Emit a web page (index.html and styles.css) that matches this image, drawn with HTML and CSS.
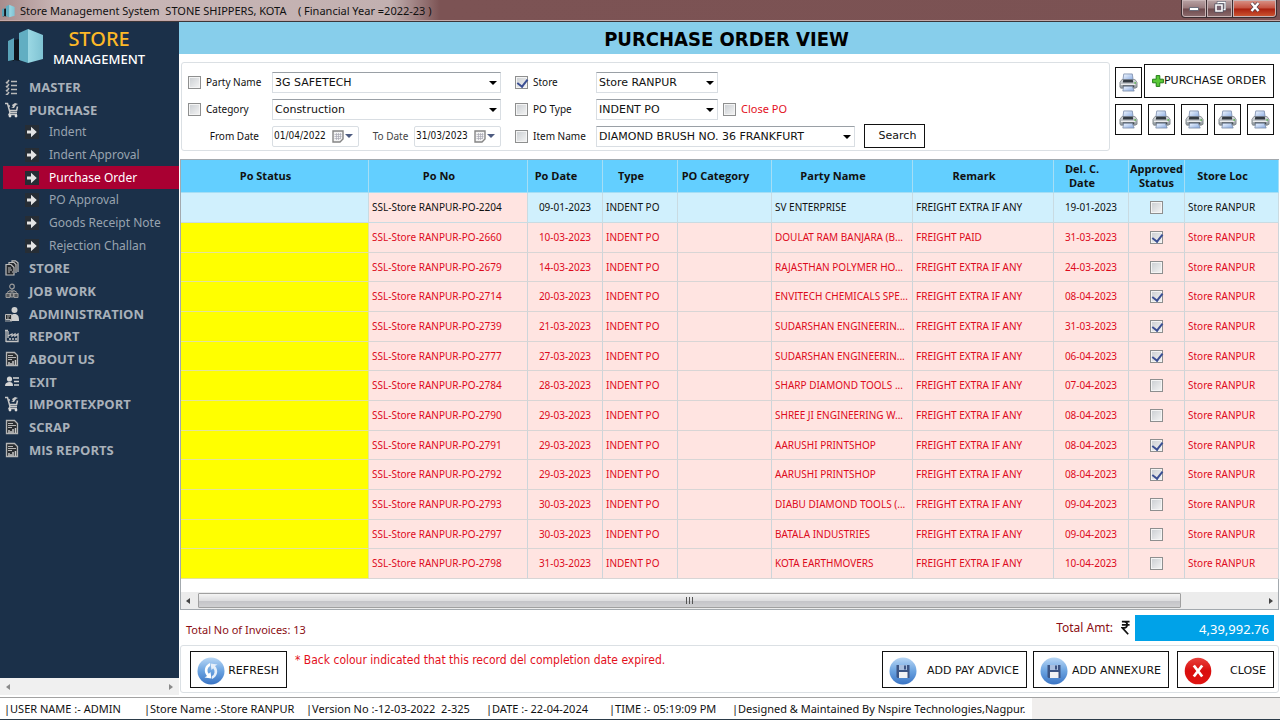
FILE: index.html
```html
<!DOCTYPE html>
<html lang="en">
<head>
<meta charset="utf-8">
<meta name="viewport" content="width=device-width, initial-scale=1">
<title>Store Management System</title>
<link rel="stylesheet" href="styles.css">
</head>
<body>
<svg class="sprite" aria-hidden="true">
  <defs>
    <linearGradient id="gTower" x1="0" x2="1" y1="0" y2="0"><stop offset="0" stop-color="#9bd8e4"/><stop offset="1" stop-color="#7fc3d3"/></linearGradient>
    <linearGradient id="gBlue" x1="0" x2="0" y1="0" y2="1"><stop offset="0" stop-color="#b9d7f5"/><stop offset=".5" stop-color="#6ba3e0"/><stop offset="1" stop-color="#3a74c4"/></linearGradient>
    <linearGradient id="gRed" x1="0" x2="0" y1="0" y2="1"><stop offset="0" stop-color="#e8413c"/><stop offset=".5" stop-color="#d90d0d"/><stop offset="1" stop-color="#e01512"/></linearGradient>
    <linearGradient id="gPaper" x1="0" x2="1" y1="0" y2="1"><stop offset="0" stop-color="#f4f9ff"/><stop offset="1" stop-color="#86a8e0"/></linearGradient>
    <linearGradient id="gBody" x1="0" x2="0" y1="0" y2="1"><stop offset="0" stop-color="#dfe3e6"/><stop offset="1" stop-color="#8d959b"/></linearGradient>
  </defs>
  <symbol id="logo" viewBox="0 0 36 36">
    <path d="M0 32l6-3v4z" fill="#0b0d12"/>
    <path d="M0 13l6-3v22l-6 1z" fill="#5aa3b8"/>
    <path d="M6 12l6-1v22l-6-1z" fill="#0e141c"/>
    <path d="M11 5L20 1v34l-9-3z" fill="#62aec2"/>
    <path d="M20 1l15 6v24l-15 4z" fill="url(#gTower)"/>
  </symbol>
  <symbol id="list" viewBox="0 0 14 16"><path d="M1 3l1 1 2-3M1 7l1 1 2-3M1 11l1 1 2-3M1 15l1 1 2-3M6 2.500h6M6 6.500h6M6 10.500h6M6 14.500h6" fill="none" stroke="#b9b9b9" stroke-width="1.500"/></symbol>
  <symbol id="cart" viewBox="0 0 14 16"><path d="M0 1.500h2.500L5 10.500h7M3 4h2M12.500 4.500L11.500 9M4.500 8.500h7.500M5 10.500l-1 2h8" fill="none" stroke="#c9c9c9" stroke-width="1.500"/><path d="M6 6l2-1-1-2 3-2 3 1-2 1-2 3z" fill="#c9c9c9"/><circle cx="5" cy="14" r="1.400" fill="#ddd"/><circle cx="11" cy="14" r="1.400" fill="#ddd"/></symbol>
  <symbol id="docs" viewBox="0 0 14 16"><path d="M1 4.500h5l3 3V15H1zM4 4V2.500h5l2 2V13M7 2V.800h3.500l2.500 2V12" fill="#26292d" stroke="#bdbdbd" stroke-width="1.200"/><path d="M3 8h3M3 10h4M3 12h2M7 12h1" stroke="#bdbdbd"/></symbol>
  <symbol id="worker" viewBox="0 0 14 16"><circle cx="7" cy="3.500" r="2.300" fill="none" stroke="#9a9a9a" stroke-width="1.200"/><path d="M7 6v3M2 9.500l3-2 2 1 2-1 3 2M1 10.500h4v4H1zM9 10.500h4v4H9zM5.500 10h3v4h-3z" fill="#55585c" stroke="#9a9a9a"/></symbol>
  <symbol id="admin" viewBox="0 0 14 16"><circle cx="9.500" cy="4" r="3" fill="#cfcfcf"/><path d="M5 15c0-5 1-7 4.500-7S14 10 14 15z" fill="#cfcfcf"/><path d="M.500 8.500h6v5h-6z" fill="#2b2e31" stroke="#bbb"/><path d="M2 10h3M2 12h2M0 15h7" stroke="#aaa"/></symbol>
  <symbol id="factory" viewBox="0 0 14 16"><path d="M1 14V2M0 2.500h3M1 13.500h12V6l-3 2V6L7 8V6L3 8M3 3v7" fill="none" stroke="#c4c4c4" stroke-width="1.300"/><path d="M4 11h2M7 11h2M10 11h2" stroke="#c4c4c4" stroke-width="1.500"/></symbol>
  <symbol id="report" viewBox="0 0 14 16"><path d="M1.500 1.500h8l3 3v10h-11z" fill="#2a2d31" stroke="#b5b5b5" stroke-width="1.300"/><path d="M3 4.500h5M3 6.500h8M3 8.500h4" stroke="#b5b5b5"/><path d="M4 14v-3M6 14v-2M8 14v-4M10.500 14V9" stroke="#c9c9c9" stroke-width="1.500"/></symbol>
  <symbol id="card" viewBox="0 0 14 16"><circle cx="4.500" cy="5" r="2.600" fill="#d5d5d5"/><path d="M0 12c0-3 2-4 4.500-4S8 9 8 12z" fill="#d5d5d5"/><path d="M8 4h6M9 7.500h5M9 11h5" stroke="#d5d5d5" stroke-width="1.600"/></symbol>
  <symbol id="arrow" viewBox="0 0 14 14"><path d="M0 0h14v14H0z" fill="#262d35"/><path d="M2 5.500h4V1.800L11.800 7 6 12.200V8.500H2z" fill="#e4e4e4"/></symbol>
  <symbol id="printer" viewBox="0 0 20 20"><path d="M5 1h9l1 7H4z" fill="url(#gPaper)" stroke="#7487a8" stroke-width=".8"/><path d="M3 7h14l2 3v5l-2 1H2l-1-1v-5z" fill="url(#gBody)" stroke="#747b80" stroke-width=".8"/><path d="M4.500 7h10l.500 3H4z" fill="#343b42"/><path d="M2 12h15" stroke="#f6f6f6"/><path d="M4 13h12v2H4z" fill="#454b51"/><path d="M5 14h9l2 5H4z" fill="url(#gPaper)" stroke="#7a89a4" stroke-width=".8"/><circle cx="17" cy="10.500" r=".9" fill="#56b34c"/></symbol>
  <symbol id="plus" viewBox="0 0 12 12"><path d="M4.200.600h3.600v3.600h3.600v3.600H7.800v3.600H4.200V7.800H.600V4.200h3.600z" fill="#59c936" stroke="#227d16"/></symbol>
  <symbol id="refresh" viewBox="0 0 28 28"><circle cx="14" cy="14" r="13.500" fill="url(#gBlue)"/><path d="M13 6a8 8 0 0 0-3 13l-2.500 1.500 7 1-1-6.500-1.700 1.800A5 5 0 0 1 13 9z" fill="#fff"/><path d="M15 22a8 8 0 0 0 3-13l2.500-1.500-7-1 1 6.500 1.700-1.800A5 5 0 0 1 15 19z" fill="#e6effa"/></symbol>
  <symbol id="floppy" viewBox="0 0 28 28"><circle cx="14" cy="14" r="13.500" fill="url(#gBlue)"/><path d="M7.500 8h13v13h-12l-1-1z" fill="#3c5584"/><path d="M10 8h8v5h-8z" fill="#a9bfdf"/><path d="M15 8.500h2v4h-2z" fill="#3c5584"/><path d="M10 15h8.500v6H10z" fill="#f2f3f5"/></symbol>
  <symbol id="cross" viewBox="0 0 28 28"><circle cx="14" cy="14" r="13.300" fill="url(#gRed)"/><path d="M9.800 8.500l8.400 11M18.200 8.500l-8.400 11" stroke="#fff" stroke-width="2.800"/></symbol>
  <symbol id="calendar" viewBox="0 0 12 13"><path d="M1 1h10v8l-3 3H1z" fill="#f3f3f3" stroke="#858585" stroke-width="1.400"/><path d="M2.500 4.500h7M2.500 6.500h7M2.500 8.500h6M4.500 3v7M6.500 3v7M8.500 3v6" stroke="#a9a9b5" stroke-width=".7"/></symbol>
  <symbol id="rupee" viewBox="0 0 10 16"><path d="M1 1.500h8.500M1 5h8.500M1 1.500h2.500c4.500 0 4.500 7 0 7H1.500L8 15.500" fill="none" stroke="#111" stroke-width="1.900"/></symbol>
</svg>

<div class="app">
  <header class="titlebar">
    <svg class="app-icon"><use href="#logo"/></svg>
    <span class="caption">Store Management System&nbsp; STONE SHIPPERS, KOTA&nbsp;&nbsp;&nbsp; ( Financial Year =2022-23 )</span>
    <div class="window-buttons">
      <button class="win" aria-label="Minimize"><svg viewBox="0 0 12 12"><path d="M1.500 6.500h9v3h-9z" fill="#fff" stroke="#555b6b" stroke-width=".8"/></svg></button>
      <button class="win" aria-label="Restore"><svg viewBox="0 0 12 12"><path d="M4 1.500h7v7H4z" fill="none" stroke="#4b4e60" stroke-width="2.400"/><path d="M4 1.500h7v7H4z" fill="none" stroke="#fff" stroke-width="1.300"/><path d="M2 4h6v6H2z" fill="#776270" stroke="#4b4e60" stroke-width="3"/><path d="M2 4h6v6H2z" fill="#776270" stroke="#fff" stroke-width="1.600"/></svg></button>
      <button class="win win-close" aria-label="Close window"><svg viewBox="0 0 12 12"><path d="M2.500 2l7 8M9.500 2l-7 8" stroke="#54404a" stroke-width="3.600"/><path d="M2.500 2l7 8M9.500 2l-7 8" stroke="#fff" stroke-width="2.400"/></svg></button>
    </div>
  </header>

  <div class="workspace">
    <aside class="sidebar">
      <div class="brand">
        <svg class="brand-logo"><use href="#logo"/></svg>
        <div class="brand-text"><span class="brand-top">STORE</span><span class="brand-bottom">MANAGEMENT</span></div>
      </div>
      <nav>
        <ul class="menu">
          <li><a href="#"><svg><use href="#list"/></svg>MASTER</a></li>
          <li><a href="#"><svg><use href="#cart"/></svg>PURCHASE</a></li>
          <li class="sub"><a href="#"><svg><use href="#arrow"/></svg>Indent</a></li>
          <li class="sub"><a href="#"><svg><use href="#arrow"/></svg>Indent Approval</a></li>
          <li class="sub active"><a href="#" aria-current="page"><svg><use href="#arrow"/></svg>Purchase Order</a></li>
          <li class="sub"><a href="#"><svg><use href="#arrow"/></svg>PO Approval</a></li>
          <li class="sub"><a href="#"><svg><use href="#arrow"/></svg>Goods Receipt Note</a></li>
          <li class="sub"><a href="#"><svg><use href="#arrow"/></svg>Rejection Challan</a></li>
          <li><a href="#"><svg><use href="#docs"/></svg>STORE</a></li>
          <li><a href="#"><svg><use href="#worker"/></svg>JOB WORK</a></li>
          <li><a href="#"><svg><use href="#admin"/></svg>ADMINISTRATION</a></li>
          <li><a href="#"><svg><use href="#factory"/></svg>REPORT</a></li>
          <li><a href="#"><svg><use href="#report"/></svg>ABOUT US</a></li>
          <li><a href="#"><svg><use href="#card"/></svg>EXIT</a></li>
          <li><a href="#"><svg><use href="#cart"/></svg>IMPORTEXPORT</a></li>
          <li><a href="#"><svg><use href="#report"/></svg>SCRAP</a></li>
          <li><a href="#"><svg><use href="#report"/></svg>MIS REPORTS</a></li>
        </ul>
      </nav>
      <div class="side-scroll"><i class="tri-left"></i><i class="tri-right"></i></div>
    </aside>

    <main class="main">
      <h1 class="page-title">PURCHASE ORDER VIEW</h1>

      <div class="top">
        <form class="filters">
          <div class="group-left">
            <label class="check"><input type="checkbox">Party Name</label>
            <span class="combo"><select aria-label="Party Name"><option>3G SAFETECH</option></select></span>
            <label class="check"><input type="checkbox">Category</label>
            <span class="combo"><select aria-label="Category"><option>Construction</option></select></span>
            <label class="date-label" for="from">From Date</label>
            <div class="dates">
              <span class="date"><input id="from" type="text" value="01/04/2022"><svg><use href="#calendar"/></svg><i></i></span>
              <label class="to-label" for="to">To Date</label>
              <span class="date"><input id="to" type="text" value="31/03/2023"><svg><use href="#calendar"/></svg><i></i></span>
            </div>
          </div>
          <div class="group-right">
            <label class="check"><input type="checkbox" checked>Store</label>
            <div class="cell"><span class="combo short"><select aria-label="Store"><option>Store RANPUR</option></select></span></div>
            <label class="check"><input type="checkbox">PO Type</label>
            <div class="cell"><span class="combo short"><select aria-label="PO Type"><option>INDENT PO</option></select></span><label class="check red"><input type="checkbox">Close PO</label></div>
            <label class="check"><input type="checkbox">Item Name</label>
            <div class="cell"><span class="combo long"><select aria-label="Item Name"><option>DIAMOND BRUSH NO. 36 FRANKFURT</option></select></span><button type="button" class="search">Search</button></div>
          </div>
        </form>
        <div class="tools">
          <div class="tool-row first"><button class="print" aria-label="Print"><svg><use href="#printer"/></svg></button><button class="add-po"><svg><use href="#plus"/></svg>PURCHASE ORDER</button></div>
          <div class="tool-row">
            <button class="print" aria-label="Print 1"><svg><use href="#printer"/></svg></button>
            <button class="print" aria-label="Print 2"><svg><use href="#printer"/></svg></button>
            <button class="print" aria-label="Print 3"><svg><use href="#printer"/></svg></button>
            <button class="print" aria-label="Print 4"><svg><use href="#printer"/></svg></button>
            <button class="print" aria-label="Print 5"><svg><use href="#printer"/></svg></button>
          </div>
        </div>
      </div>

      <section class="grid">
        <table>
          <colgroup><col class="c-status"><col class="c-no"><col class="c-date"><col class="c-date"><col class="c-cat"><col class="c-party"><col class="c-party"><col class="c-date"><col class="c-appr"><col class="c-loc"></colgroup>
          <thead><tr><th>Po Status</th><th>Po No</th><th>Po Date</th><th>Type</th><th>PO Category</th><th>Party Name</th><th>Remark</th><th>Del. C.<br>Date</th><th class="tight">Approved<br>Status</th><th>Store Loc</th></tr></thead>
          <tbody>
            <tr class="current"><td></td><td>SSL-Store RANPUR-PO-2204</td><td>09-01-2023</td><td>INDENT PO</td><td></td><td>SV ENTERPRISE</td><td>FREIGHT EXTRA IF ANY</td><td>19-01-2023</td><td><input type="checkbox" aria-label="Approved 2204"></td><td>Store RANPUR</td></tr>
            <tr><td></td><td>SSL-Store RANPUR-PO-2660</td><td>10-03-2023</td><td>INDENT PO</td><td></td><td>DOULAT RAM BANJARA (B...</td><td>FREIGHT PAID</td><td>31-03-2023</td><td><input type="checkbox" aria-label="Approved 2660" checked></td><td>Store RANPUR</td></tr>
            <tr><td></td><td>SSL-Store RANPUR-PO-2679</td><td>14-03-2023</td><td>INDENT PO</td><td></td><td>RAJASTHAN POLYMER HO...</td><td>FREIGHT EXTRA IF ANY</td><td>24-03-2023</td><td><input type="checkbox" aria-label="Approved 2679"></td><td>Store RANPUR</td></tr>
            <tr><td></td><td>SSL-Store RANPUR-PO-2714</td><td>20-03-2023</td><td>INDENT PO</td><td></td><td>ENVITECH CHEMICALS SPE...</td><td>FREIGHT EXTRA IF ANY</td><td>08-04-2023</td><td><input type="checkbox" aria-label="Approved 2714" checked></td><td>Store RANPUR</td></tr>
            <tr><td></td><td>SSL-Store RANPUR-PO-2739</td><td>21-03-2023</td><td>INDENT PO</td><td></td><td>SUDARSHAN ENGINEERIN...</td><td>FREIGHT EXTRA IF ANY</td><td>31-03-2023</td><td><input type="checkbox" aria-label="Approved 2739" checked></td><td>Store RANPUR</td></tr>
            <tr><td></td><td>SSL-Store RANPUR-PO-2777</td><td>27-03-2023</td><td>INDENT PO</td><td></td><td>SUDARSHAN ENGINEERIN...</td><td>FREIGHT EXTRA IF ANY</td><td>06-04-2023</td><td><input type="checkbox" aria-label="Approved 2777" checked></td><td>Store RANPUR</td></tr>
            <tr><td></td><td>SSL-Store RANPUR-PO-2784</td><td>28-03-2023</td><td>INDENT PO</td><td></td><td>SHARP DIAMOND TOOLS ...</td><td>FREIGHT EXTRA IF ANY</td><td>07-04-2023</td><td><input type="checkbox" aria-label="Approved 2784"></td><td>Store RANPUR</td></tr>
            <tr><td></td><td>SSL-Store RANPUR-PO-2790</td><td>29-03-2023</td><td>INDENT PO</td><td></td><td>SHREE JI ENGINEERING W...</td><td>FREIGHT EXTRA IF ANY</td><td>08-04-2023</td><td><input type="checkbox" aria-label="Approved 2790"></td><td>Store RANPUR</td></tr>
            <tr><td></td><td>SSL-Store RANPUR-PO-2791</td><td>29-03-2023</td><td>INDENT PO</td><td></td><td>AARUSHI PRINTSHOP</td><td>FREIGHT EXTRA IF ANY</td><td>08-04-2023</td><td><input type="checkbox" aria-label="Approved 2791" checked></td><td>Store RANPUR</td></tr>
            <tr><td></td><td>SSL-Store RANPUR-PO-2792</td><td>29-03-2023</td><td>INDENT PO</td><td></td><td>AARUSHI PRINTSHOP</td><td>FREIGHT EXTRA IF ANY</td><td>08-04-2023</td><td><input type="checkbox" aria-label="Approved 2792" checked></td><td>Store RANPUR</td></tr>
            <tr><td></td><td>SSL-Store RANPUR-PO-2793</td><td>30-03-2023</td><td>INDENT PO</td><td></td><td>DIABU DIAMOND TOOLS (...</td><td>FREIGHT EXTRA IF ANY</td><td>09-04-2023</td><td><input type="checkbox" aria-label="Approved 2793"></td><td>Store RANPUR</td></tr>
            <tr><td></td><td>SSL-Store RANPUR-PO-2797</td><td>30-03-2023</td><td>INDENT PO</td><td></td><td>BATALA INDUSTRIES</td><td>FREIGHT EXTRA IF ANY</td><td>09-04-2023</td><td><input type="checkbox" aria-label="Approved 2797"></td><td>Store RANPUR</td></tr>
            <tr><td></td><td>SSL-Store RANPUR-PO-2798</td><td>31-03-2023</td><td>INDENT PO</td><td></td><td>KOTA EARTHMOVERS</td><td>FREIGHT EXTRA IF ANY</td><td>10-04-2023</td><td><input type="checkbox" aria-label="Approved 2798"></td><td>Store RANPUR</td></tr>
          </tbody>
        </table>
        <div class="hscroll"><i class="tri-left"></i><div class="track"><div class="thumb"><i class="grip"></i></div></div><i class="tri-right"></i></div>
      </section>

      <div class="totals">
        <span class="count">Total No of Invoices: 13</span>
        <label class="amt-label" for="amt">Total Amt:</label>
        <svg class="rupee"><use href="#rupee"/></svg>
        <input id="amt" class="amt" type="text" value="4,39,992.76" readonly>
      </div>

      <div class="actions">
        <button class="action refresh"><svg><use href="#refresh"/></svg><span>REFRESH</span></button>
        <p class="note">* Back colour indicated that this record del completion date expired.</p>
        <button class="action advice"><svg><use href="#floppy"/></svg><span>ADD PAY ADVICE</span></button>
        <button class="action annexure"><svg><use href="#floppy"/></svg><span>ADD ANNEXURE</span></button>
        <button class="action close"><svg><use href="#cross"/></svg><span>CLOSE</span></button>
      </div>
    </main>
  </div>

  <footer class="statusbar">
    <span>|USER NAME :- ADMIN</span>
    <span>|Store Name :-Store RANPUR</span>
    <span>|Version No :-12-03-2022&nbsp; 2-325</span>
    <span>|DATE :- 22-04-2024</span>
    <span>|TIME :- 05:19:09 PM</span>
    <span>|Designed &amp; Maintained By Nspire Technologies,Nagpur.</span>
    <span class="filler"></span>
  </footer>
</div>
</body>
</html>
```
FILE: styles.css
```css
* { box-sizing: border-box; }
body {
  margin: 0;
  font-family: "Noto Sans", "Open Sans", sans-serif;
  font-size: 11px;
  line-height: 14px;
  color: #111;
  background: #fff;
}
button, input, select { font: inherit; color: inherit; margin: 0; }
button { padding: 0; background: #fff; border: 1px solid #111; }
.sprite { position: absolute; width: 0; height: 0; }
.app { display: flex; flex-direction: column; min-height: 100vh; }

/* Title bar */
.titlebar {
  display: flex;
  align-items: center;
  height: 22px;
  padding-left: 2px;
  border-bottom: 1px solid #3c3538;
  background: linear-gradient(90deg, #a98d8d 0, #c9b7b7 60px, #c2b0b0 390px, #7c5354 440px, #7b5253 100%);
  box-shadow: inset 0 -1px 0 #c4a9a9;
}
.app-icon { width: 13px; height: 14px; margin-right: 5px; }
.caption { white-space: pre; }
.window-buttons { display: flex; align-self: flex-start; margin-left: auto; margin-right: 3px; }
.win {
  width: 26px;
  height: 18px;
  border: 1px solid #3b2d31;
  border-top: 0;
  border-left-width: 0;
  background: linear-gradient(#b9a3a5 0, #98797b 48%, #6d4a4d 52%, #8d6c6e 100%);
  box-shadow: inset 0 0 0 1px #c8b4b5;
}
.win:first-child { border-left-width: 1px; border-radius: 0 0 0 4px; }
.win-close { width: 44px; border-radius: 0 0 4px 0; background: linear-gradient(#d9958a 0, #c5513f 48%, #a91f0e 52%, #cf5a35 100%); }
.win svg { width: 12px; height: 12px; }

.workspace { display: flex; flex: 1; }

/* Sidebar */
.sidebar { display: flex; flex-direction: column; width: 179px; flex: none; background: #1b3049; }
.brand { display: flex; align-items: flex-start; height: 53px; padding: 6px 0 0 8px; gap: 9px; }
.brand-logo { width: 36px; height: 36px; }
.brand-text { display: flex; flex-direction: column; align-items: center; color: #fff; }
.brand-top { font-size: 20px; line-height: 22px; color: #fcb827; font-weight: 500; }
.brand-bottom { font-size: 13px; line-height: 18px; font-weight: 500; }
.menu { list-style: none; margin: 0; padding: 0; font-family: "Open Sans", sans-serif; font-size: 13px; font-weight: 700; }
.menu li { height: 23px; }
.menu li:nth-child(3n) { height: 22px; }
.menu a { display: flex; align-items: center; height: 100%; padding-left: 5px; gap: 10px; color: #a9b1ba; text-decoration: none; white-space: nowrap; }
.menu svg { width: 14px; height: 16px; }
.menu .sub a { margin-left: 3px; padding-left: 22px; font-family: "Noto Sans", sans-serif; font-weight: 400; font-size: 12px; color: #98a3af; }
.menu .sub svg { height: 14px; }
.menu .sub.active a { background: #a90032; color: #fff; }
.side-scroll { display: flex; justify-content: space-between; align-items: center; height: 19px; margin-top: auto; padding: 0 6px; background: #f0f0f0; border-bottom: 2px solid #fff; }
.tri-left, .tri-right { border: 3px solid transparent; width: 0; height: 0; }
.tri-left { border-right: 4px solid #444; border-left: 0; }
.tri-right { border-left: 4px solid #444; border-right: 0; }
.side-scroll .tri-left { border-right-color: #8a8a8a; }
.side-scroll .tri-right { border-left-color: #8a8a8a; }

/* Main */
.main { display: flex; flex-direction: column; flex: 1; min-width: 0; background: #fff; }
.page-title {
  margin: 0;
  padding-right: 6px;
  height: 32px;
  background: #87ceeb;
  font: 700 20px/34px "DejaVu Sans Condensed", "DejaVu Sans", sans-serif;
  text-align: center;
  color: #000;
}
.top { display: flex; height: 105px; padding: 8px 6px 8px 2px; }
.filters { display: flex; flex: 1; gap: 14px; padding: 6px; border: 1px solid #dbe0e4; border-radius: 3px; font-size: 10px; }
.group-left, .group-right { display: grid; align-items: center; grid-auto-rows: 26px; row-gap: 1px; align-content: start; }
.group-left { grid-template-columns: 84px 229px; }
.group-right { grid-template-columns: 81px auto; }
.check { display: flex; align-items: center; gap: 5px; white-space: nowrap; }
input[type="checkbox"] {
  appearance: none;
  flex: none;
  width: 13px;
  height: 13px;
  border: 1px solid #8e8f8f;
  background: linear-gradient(135deg, #c9cdd1, #f5f5f5);
  box-shadow: inset 0 0 0 1px #f4f4f4;
  position: relative;
}
input[type="checkbox"]:checked::after {
  content: "";
  position: absolute;
  left: 3px;
  top: 0;
  width: 5px;
  height: 8px;
  border: solid #3b4f93;
  border-width: 0 2px 2px 0;
  transform: rotate(38deg);
}
.red { color: #e3101c; }
.combo { position: relative; display: block; width: 229px; height: 21px; }
.combo.short { width: 122px; }
.combo.long { width: 259px; }
.combo select {
  appearance: none;
  width: 100%;
  height: 100%;
  padding: 1px 18px 0 2px;
  border: 1px solid #d9dee3;
  border-top-color: #9aa0a6;
  border-radius: 0;
  background: #fff;
  font-family: "DejaVu Sans", sans-serif;
  font-size: 11px;
}
.combo::after {
  content: "";
  position: absolute;
  right: 4px;
  top: 9px;
  border: 4px solid transparent;
  border-top-color: #000;
  border-bottom: 0;
  pointer-events: none;
}
.cell { display: flex; align-items: center; }
.cell .check { margin-left: 5px; font-size: 11px; }
.date-label { text-align: right; padding-right: 13px; }
.dates { display: flex; align-items: center; justify-content: space-between; }
.to-label { margin-left: 8px; color: #444; }
.date { display: flex; align-items: center; width: 87px; height: 21px; padding: 0 5px 0 1px; border: 1px solid #d9dee3; border-radius: 2px; }
.date input { flex: 1; min-width: 0; padding: 0; border: 0; background: none; font-family: "DejaVu Sans Condensed", "DejaVu Sans", sans-serif; }
.date svg { width: 12px; height: 13px; }
.date i { margin-left: 1px; border: 4px solid transparent; border-top-color: #4d5b80; border-bottom: 0; }
.search { width: 61px; height: 24px; margin-left: 9px; padding-left: 6px; font-family: "DejaVu Sans", sans-serif; font-size: 11px; }
.tools { display: flex; flex-direction: column; gap: 6px; padding: 2px 0 0 5px; }
.tool-row { display: flex; gap: 6px; }
.tool-row.first { align-items: flex-end; gap: 2px; }
.print { display: grid; place-items: center; width: 27px; height: 31px; }
.print svg { width: 19px; height: 19px; }
.add-po { display: flex; align-items: center; justify-content: center; flex: 1; height: 34px; font-family: "DejaVu Sans", sans-serif; white-space: nowrap; }
.add-po svg { width: 12px; height: 12px; }

/* Orders grid */
.grid { display: flex; flex-direction: column; flex: 1; margin: 0 1px; border: 1px solid #a3a9ae; }
table { width: 100%; table-layout: fixed; border-collapse: separate; border-spacing: 0; }
.c-status { width: 188px; }
.c-no { width: 159px; }
.c-date { width: 75px; }
.c-cat { width: 94px; }
.c-party { width: 141px; }
.c-appr { width: 56px; }
.c-loc { width: 94px; }
th, td { padding: 0 3px; overflow: hidden; white-space: nowrap; border-right: 1px solid #cdd5da; border-bottom: 1px solid #d8d5d5; text-align: left; }
th { height: 33px; padding: 0 18px 0 0; font-family: "Open Sans", sans-serif; line-height: 14px; text-align: center; background: #63cfff; border-color: #a5def5; }
th.tight { padding-right: 0; }
td { height: 30px; padding-bottom: 1px; background: #ffe4e1; color: #dd0a1c; font-size: 10px; }
tbody tr:nth-child(3n) td { height: 29px; }
td:first-child { background: #ff0; border-color: #e3e39a; }
td:nth-child(3), td:nth-child(8), td:nth-child(9) { text-align: center; }
td input { display: inline-block; vertical-align: middle; }
.current td, .current td:first-child { background: #d0f0fd; color: #111; border-color: #c9dbe2; }
.current td:nth-child(2) { background: #ffe4e1; }
.hscroll { display: flex; align-items: center; gap: 5px; height: 17px; margin-top: auto; padding: 0 5px; background: #ececec; }
.track { flex: 1; height: 15px; }
.thumb { display: grid; place-items: center; width: 92%; height: 15px; margin-left: 3px; border: 1px solid #a0a0a0; border-radius: 1px; background: linear-gradient(#f4f4f4, #dedee0 50%, #c4c4c8 55%, #d0d0d2); }
.grip { width: 7px; height: 7px; background: repeating-linear-gradient(90deg, #555 0 1px, transparent 1px 3px); }

/* Totals */
.totals { display: flex; align-items: center; height: 35px; padding: 0 6px 0 7px; color: #8b0e14; font-size: 12px; }
.count { margin-right: auto; padding-top: 4px; font-size: 11px; }
.rupee { width: 9px; height: 15px; margin: 0 5px 0 8px; }
.amt { width: 139px; height: 26px; border: 0; padding: 3px 5px 0 0; background: #00a2e8; color: #fff; font-size: 13px; text-align: right; }

/* Bottom actions */
.actions { display: flex; align-items: center; height: 48px; margin: 0 1px 4px; padding: 1px 4px 0 9px; border: 1px solid #dbe0e4; border-radius: 3px; font-family: "DejaVu Sans", sans-serif; }
.action { display: flex; align-items: center; justify-content: space-between; height: 37px; padding: 2px 7px 0 6px; white-space: nowrap; }
.action svg { width: 28px; height: 28px; }
.refresh { width: 97px; }
.advice { width: 145px; margin-right: 6px; }
.annexure { width: 136px; margin-right: 8px; }
.close { width: 97px; }
.note { align-self: flex-start; margin: 6px auto 0 8px; color: #e3101c; font-family: "DejaVu Sans Condensed", "DejaVu Sans", sans-serif; font-size: 12px; }

/* Status bar */
.statusbar { display: grid; grid-template-columns: 140px 162px 180px 123px 123px auto 1fr; align-items: center; height: 23px; padding-left: 4px; border-top: 1px solid #a2a2a2; border-bottom: 1px solid #2b3b49; white-space: nowrap; }
.filler { height: 100%; margin-left: 6px; background: #f0eeed; }
```
